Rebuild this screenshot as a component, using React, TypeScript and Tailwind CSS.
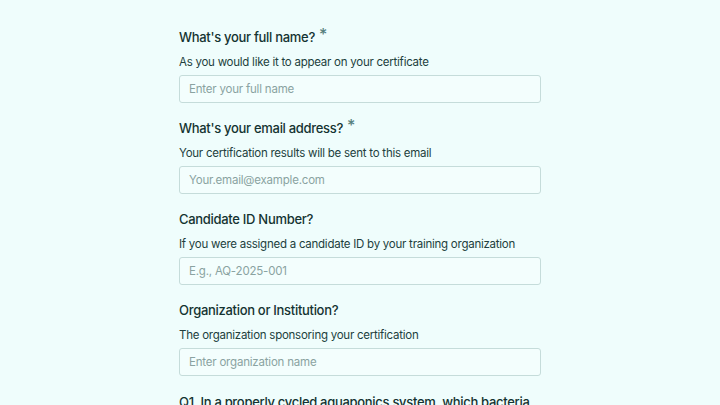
import React from 'react';

interface Field {
  label: string;
  hint: string;
  placeholder: string;
  required?: boolean;
  type?: string;
}

const fields: Field[] = [
  {
    label: "What's your full name?",
    hint: 'As you would like it to appear on your certificate',
    placeholder: 'Enter your full name',
    required: true,
  },
  {
    label: "What's your email address?",
    hint: 'Your certification results will be sent to this email',
    placeholder: 'Your.email@example.com',
    required: true,
    type: 'email',
  },
  {
    label: 'Candidate ID Number?',
    hint: 'If you were assigned a candidate ID by your training organization',
    placeholder: 'E.g., AQ-2025-001',
  },
  {
    label: 'Organization or Institution?',
    hint: 'The organization sponsoring your certification',
    placeholder: 'Enter organization name',
  },
];

function FormField({ field }: { field: Field }) {
  return (
    <div className="flex flex-col">
      <label className="flex items-start text-[13px] leading-[20px] font-medium tracking-[-0.3px] text-[#143331]">
        {field.label}
        {field.required && (
          <span className="ml-[4px] text-[16px] leading-[14px] text-[#56807c]">*</span>
        )}
      </label>
      <p className="mt-[5px] text-[11.5px] leading-[20px] tracking-[-0.25px] text-[#223f3d]">{field.hint}</p>
      <input
        type={field.type || 'text'}
        placeholder={field.placeholder}
        className="mt-[3px] h-[28px] w-full rounded-[3px] border-[1.5px] border-[#c5dcda] bg-[#f3fefd] px-[9px] text-[11.5px] tracking-[-0.2px] text-[#143331] placeholder:text-[#8aa3a1] outline-none"
      />
    </div>
  );
}

export default function App() {
  return (
    <div
      className="h-screen w-full bg-[#effdfc] overflow-hidden"
      style={{ fontFamily: 'Inter, "Noto Sans", sans-serif' }}
    >
      <div className="mx-auto w-[362px] pt-[27px] flex flex-col gap-[15px]">
        {fields.map((f) => (
          <FormField key={f.label} field={f} />
        ))}
        <h2 className="text-[13px] leading-[22px] font-medium tracking-[-0.3px] text-[#143331]">
          Q1. In a properly cycled aquaponics system, which bacteria convert ammonia into nitrites?
        </h2>
      </div>
    </div>
  );
}
